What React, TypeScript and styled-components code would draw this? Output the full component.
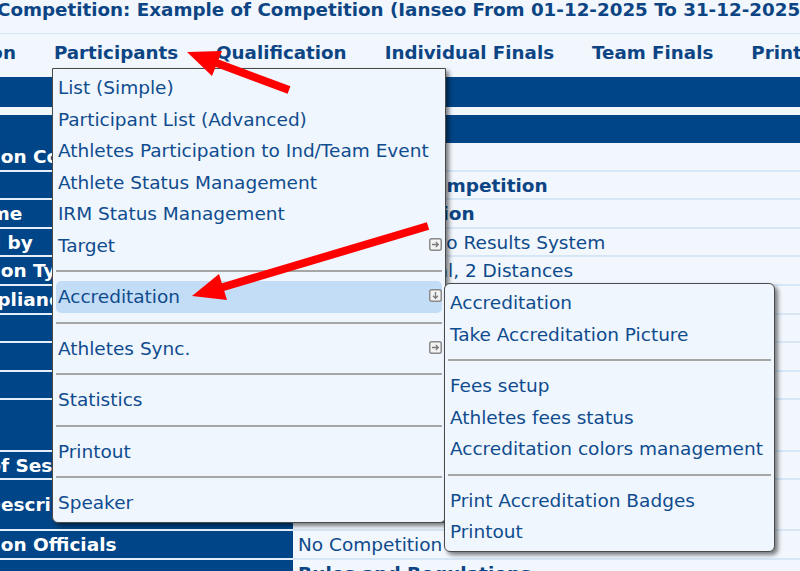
import React from 'react'
import styled, { createGlobalStyle } from 'styled-components'

const GlobalStyle = createGlobalStyle`
	html, body {
		margin: 0;
		padding: 0;
		background: #f1f7fd;
		overflow: hidden;
	}
	body {
		font-family: "DejaVu Sans", Verdana, sans-serif;
		color: #0e4a8b;
	}
	* { box-sizing: border-box; }
`

const Page = styled.div`
	position: relative;
	width: 800px;
	height: 571px;
	overflow: hidden;
`

const TitleBar = styled.div`
	height: 34px;
	border-bottom: 1px solid #d2e5f6;
	white-space: nowrap;
	font-size: 18.3px;
	line-height: 20px;
	font-weight: bold;
	color: #0d4584;
	margin-left: -3px;
`

const NavBar = styled.ul`
	position: relative;
	z-index: 2;
	display: flex;
	height: 36px;
	margin: 0 0 0 -129px;
	padding: 0;
	list-style: none;
	white-space: nowrap;
`

const NavItem = styled.li`
	position: relative;
	padding: 0 19px;
	font-size: 18.25px;
	font-weight: bold;
	line-height: 38px;
	color: #0d4584;
`

const Menu = styled.div<{ $sub?: boolean }>`
	position: absolute;
	top: ${p => (p.$sub ? '2px' : 'calc(100% - 2px)')};
	left: ${p => (p.$sub ? 'calc(100% + 2px)' : '17px')};
	width: ${p => (p.$sub ? '331px' : '394px')};
	padding: 3px;
	background: #eff6fe;
	border: 1px solid #4a4a4a;
	border-radius: ${p => (p.$sub ? '6px' : '0 0 6px 6px')};
	box-shadow: 3px 3px 4px rgba(0, 0, 0, 0.5);
	font-weight: normal;
	line-height: normal;
	text-align: left;
`

const MenuItem = styled.div<{ $active?: boolean }>`
	position: relative;
	display: flex;
	align-items: center;
	justify-content: space-between;
	height: 31.5px;
	padding: 0 0 0 2px;
	font-size: 18.5px;
	line-height: 31.5px;
	color: #0f4c8e;
	border-radius: 5px;
	background: ${p => (p.$active ? '#c4ddf7' : 'transparent')};
`

const Separator = styled.div`
	height: 2px;
	margin: 9px 0;
	background: #a6a6a6;
`

const SubIcon = styled.svg`
	flex: none;
	width: 13px;
	height: 13px;
	margin: -2px 0 0 0;
`

const Table = styled.div`
	width: 906px;
	margin: 7px 0 0 -106px;
`

const Band = styled.div<{ $h: number; $gap?: number }>`
	height: ${p => p.$h}px;
	margin-bottom: ${p => p.$gap ?? 0}px;
	background: #004587;
	color: #ffffff;
	font-size: 18.5px;
	font-weight: bold;
	line-height: ${p => p.$h}px;
	text-align: center;
`

const Row = styled.div`
	display: grid;
	grid-template-columns: 399px 1fr;
`

const Label = styled.div`
	display: flex;
	align-items: center;
	padding: 3px 5px 1px;
	background: #004587;
	border-bottom: 2px solid #e6eff9;
	color: #ffffff;
	font-size: 18.5px;
	font-weight: bold;
	line-height: 22.6px;
	white-space: nowrap;
	overflow: hidden;
`

const Value = styled.div<{ $bold?: boolean }>`
	padding: 3px 5px 1px;
	border-bottom: 2px solid #d5e6f6;
	font-size: 18.5px;
	font-weight: ${p => (p.$bold ? 'bold' : 'normal')};
	line-height: 22.6px;
	color: ${p => (p.$bold ? '#0d4584' : '#0e4a8b')};
	white-space: nowrap;
`

const Overlay = styled.svg`
	position: absolute;
	left: 0;
	top: 0;
	z-index: 10;
	pointer-events: none;
`

function ArrowIcon({ down }: { down?: boolean }) {
	return (
		<SubIcon viewBox="0 0 13 13">
			<rect x="0.75" y="0.75" width="11.5" height="11.5" rx="2" fill="#f3f3f3" stroke="#8a8a8a" strokeWidth="1.5" />
			{down ? (
				<path d="M6.5 3v6.3M4 6.8l2.5 2.5 2.5-2.5" fill="none" stroke="#7a7a7a" strokeWidth="1.3" />
			) : (
				<path d="M3 6.5h6.3M6.8 4l2.5 2.5-2.5 2.5" fill="none" stroke="#7a7a7a" strokeWidth="1.3" />
			)}
		</SubIcon>
	)
}

const rows: { label: string; value: React.ReactNode; bold?: boolean }[] = [
	{ label: 'Competition Code', value: 'EXAMPLE' },
	{ label: 'Name', value: 'Example of Competition', bold: true },
	{ label: 'Short Name', value: 'Test Competition', bold: true },
	{ label: 'Promoted by', value: 'Not connected to Results System' },
	{ label: 'Competition Type', value: 'Indoor Individual, 2 Distances' },
	{ label: 'Rule Compliance', value: 'Yes' },
	{ label: 'Where', value: 'Example Town' },
	{ label: 'From', value: '01-12-2025' },
	{ label: 'To', value: '31-12-2025' },
	{ label: 'Venue', value: <>Example Venue<br />Example Town</> },
	{ label: 'Number of Sessions', value: '2' },
	{ label: 'Session Description', value: <>Session 1: Qualification<br />Session 2: Finals</> },
	{ label: 'Competition Officials', value: 'No Competition Officials' },
	{ label: 'Rules', value: 'Rules and Regulations', bold: true },
]

export default function App() {
	return (
		<Page>
			<GlobalStyle />
			<TitleBar>Competition: Example of Competition (Ianseo From 01-12-2025 To 31-12-2025)</TitleBar>
			<NavBar>
				<NavItem>Competition</NavItem>
				<NavItem>
					Participants
					<Menu>
						<MenuItem>List (Simple)</MenuItem>
						<MenuItem>Participant List (Advanced)</MenuItem>
						<MenuItem>Athletes Participation to Ind/Team Event</MenuItem>
						<MenuItem>Athlete Status Management</MenuItem>
						<MenuItem>IRM Status Management</MenuItem>
						<MenuItem>Target<ArrowIcon /></MenuItem>
						<Separator />
						<MenuItem $active>
							Accreditation<ArrowIcon down />
							<Menu $sub>
								<MenuItem>Accreditation</MenuItem>
								<MenuItem>Take Accreditation Picture</MenuItem>
								<Separator />
								<MenuItem>Fees setup</MenuItem>
								<MenuItem>Athletes fees status</MenuItem>
								<MenuItem>Accreditation colors management</MenuItem>
								<Separator />
								<MenuItem>Print Accreditation Badges</MenuItem>
								<MenuItem>Printout</MenuItem>
							</Menu>
						</MenuItem>
						<Separator />
						<MenuItem>Athletes Sync.<ArrowIcon /></MenuItem>
						<Separator />
						<MenuItem>Statistics</MenuItem>
						<Separator />
						<MenuItem>Printout</MenuItem>
						<Separator />
						<MenuItem>Speaker</MenuItem>
					</Menu>
				</NavItem>
				<NavItem>Qualification</NavItem>
				<NavItem>Individual Finals</NavItem>
				<NavItem>Team Finals</NavItem>
				<NavItem>Printout</NavItem>
			</NavBar>
			<Table>
				<Band $h={30} $gap={8}>Competition Info</Band>
				<Band $h={28}>Main data</Band>
				{rows.map((row, index) => (
					<Row key={index}>
						<Label>{row.label}</Label>
						<Value $bold={row.bold}>{row.value}</Value>
					</Row>
				))}
			</Table>
			<Overlay width="800" height="571" viewBox="0 0 800 571">
				<line x1="289" y1="90" x2="214" y2="62" stroke="#ff0000" strokeWidth="8" />
				<polygon points="187,52 222,51 212,76" fill="#ff0000" />
				<line x1="428" y1="226" x2="220" y2="288" stroke="#ff0000" strokeWidth="8" />
				<polygon points="192,296 219,274 227,300" fill="#ff0000" />
			</Overlay>
		</Page>
	)
}
